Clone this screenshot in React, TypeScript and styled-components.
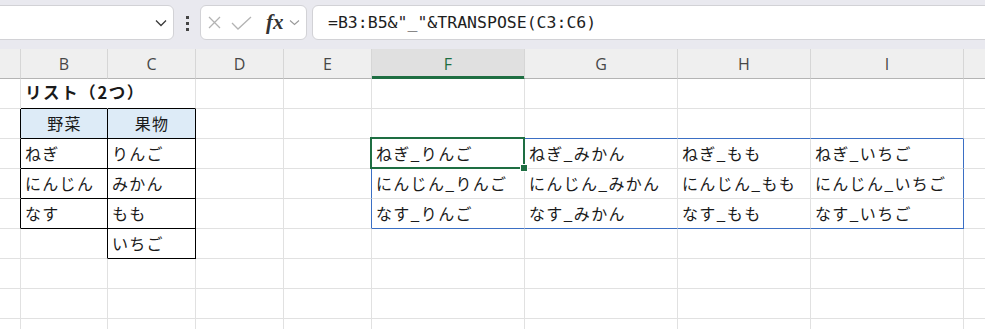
import React from 'react';
import styled, {createGlobalStyle} from "styled-components";

const GlobalStyle = createGlobalStyle`
    html, body {
        margin: 0;
        padding: 0;
        background: #ffffff;
        overflow: hidden;
    }
`

const COLS = [21, 87, 88, 88, 88, 153, 153, 133, 153, 80];
const LETTERS = ["", "B", "C", "D", "E", "F", "G", "H", "I", ""];
const ROWS = 9;

const vegs = ["ねぎ", "にんじん", "なす"];
const fruits = ["りんご", "みかん", "もも", "いちご"];

// r: 1-based sheet row, c: 0-based column index (0 = A)
const cellText = (r: number, c: number): string => {
    if (r === 1 && c === 1) return "リスト（2つ）";
    if (r === 2 && c === 1) return "野菜";
    if (r === 2 && c === 2) return "果物";
    if (c === 1 && r >= 3 && r <= 5) return vegs[r - 3];
    if (c === 2 && r >= 3 && r <= 6) return fruits[r - 3];
    if (c >= 5 && c <= 8 && r >= 3 && r <= 5) return vegs[r - 3] + "_" + fruits[c - 5];
    return "";
};

const boxed = (r: number, c: number) =>
    (r === 2 && (c === 1 || c === 2)) ||
    (c === 1 && r >= 3 && r <= 5) ||
    (c === 2 && r >= 3 && r <= 6);

const spill = (r: number, c: number) => c >= 5 && c <= 8 && r >= 3 && r <= 5;

const GRID = "#e1e1e1";
const BLACK = "#000000";
const BLUE = "#3b6fc4";

const edgeColor = (a: [number, number], b: [number, number], hide = false) => {
    if (boxed(...a) || boxed(...b)) return BLACK;
    if (spill(...a) !== spill(...b)) return BLUE;
    if (hide) return "transparent";
    return GRID;
};

export default function App() {
    const cells: React.ReactNode[] = [];
    for (let r = 1; r <= ROWS; r++) {
        for (let c = 0; c < COLS.length; c++) {
            const right = edgeColor([r, c], [r, c + 1], r === 1 && c === 1);
            const bottom = edgeColor([r, c], [r + 1, c]);
            cells.push(
                <Cell
                    key={`${r}-${c}`}
                    $right={right}
                    $bottom={bottom}
                    $head={r === 2 && (c === 1 || c === 2)}
                    $bold={r === 1}
                    $active={r === 3 && c === 5}
                >
                    {cellText(r, c)}
                </Cell>
            );
        }
    }

    return (
        <>
            <GlobalStyle/>
            <Page>
                <Toolbar>
                    <NameBox>
                        <svg width="12" height="8" viewBox="0 0 12 8">
                            <path d="M1 1.5 L6 6.5 L11 1.5" fill="none" stroke="#3a3a3a" strokeWidth="1.3"/>
                        </svg>
                    </NameBox>
                    <Dots>
                        <i/><i/><i/>
                    </Dots>
                    <FxBox>
                        <svg width="13" height="13" viewBox="0 0 13 13">
                            <path d="M1 1 L12 12 M12 1 L1 12" stroke="#b3b3b3" strokeWidth="1.3"/>
                        </svg>
                        <svg width="21" height="14" viewBox="0 0 21 14">
                            <path d="M1 7 L7 13 L20 1" fill="none" stroke="#b3b3b3" strokeWidth="1.3"/>
                        </svg>
                        <Fx>fx</Fx>
                        <svg width="11" height="7" viewBox="0 0 11 7">
                            <path d="M1 1.5 L5.5 5.5 L10 1.5" fill="none" stroke="#9a9a9a" strokeWidth="1.1"/>
                        </svg>
                    </FxBox>
                    <FormulaBox>=B3:B5&amp;"_"&amp;TRANSPOSE(C3:C6)</FormulaBox>
                </Toolbar>
                <Sheet>
                    {LETTERS.map((l, i) => (
                        <ColHead key={i} $selected={l === "F"}>{l}</ColHead>
                    ))}
                    {cells}
                </Sheet>
            </Page>
        </>
    );
}

const Page = styled.div`
    width: 985px;
    height: 329px;
    overflow: hidden;
    font-family: "Noto Sans CJK JP", "Noto Sans", sans-serif;
`
const Toolbar = styled.div`
    height: 49px;
    box-sizing: border-box;
    background: #e9e9ef;
    display: flex;
    align-items: flex-start;
    padding-top: 5px;
`
const Box = styled.div`
    height: 35px;
    box-sizing: border-box;
    background: #ffffff;
    border: 1px solid #d2d2d6;
    border-radius: 6px;
    display: flex;
    align-items: center;
`
const NameBox = styled(Box)`
    width: 183px;
    margin-left: -9px;
    justify-content: flex-end;
    padding-right: 6px;
`
const Dots = styled.div`
    width: 26px;
    display: flex;
    flex-direction: column;
    align-items: center;
    gap: 3px;
    padding-top: 11px;

    i {
        display: block;
        width: 3px;
        height: 3px;
        background: #444;
    }
`
const FxBox = styled(Box)`
    width: 107px;
    padding-left: 7px;
    gap: 9px;

    svg:nth-child(2) {
        margin-left: 1px;
    }
    svg:last-child {
        margin-left: -4px;
    }
`
const Fx = styled.span`
    font-family: "Liberation Serif", serif;
    font-style: italic;
    font-weight: 700;
    font-size: 21px;
    color: #333;
    line-height: 1;
    margin-left: 5px;
`
const FormulaBox = styled(Box)`
    flex: 1;
    margin-left: 5px;
    margin-right: -10px;
    padding-left: 15px;
    font-family: "DejaVu Sans Mono", "Liberation Mono", monospace;
    font-size: 16.5px;
    color: #1e1e1e;
`
const Sheet = styled.div`
    display: grid;
    grid-template-columns: ${COLS.map(w => w + "px").join(" ")};
    grid-template-rows: 30px repeat(${ROWS}, 30px);
`
const ColHead = styled.div<{ $selected?: boolean }>`
    box-sizing: border-box;
    background: ${p => p.$selected ? "#e0e0e0" : "#efefef"};
    border-right: 1px solid #d6d6d6;
    border-bottom: 1px solid #b4b4b4;
    box-shadow: ${p => p.$selected ? "inset 0 -2px 0 #1e6e42" : "none"};
    ${p => p.$selected && "border-bottom-color: #1e6e42;"}
    display: flex;
    align-items: center;
    justify-content: center;
    padding-top: 1px;
    font-family: "Open Sans", "Noto Sans", sans-serif;
    font-size: 16px;
    color: ${p => p.$selected ? "#1e6e42" : "#474747"};
`
const Cell = styled.div<{
    $right: string;
    $bottom: string;
    $head?: boolean;
    $bold?: boolean;
    $active?: boolean;
}>`
    position: relative;
    box-sizing: border-box;
    border-right: 1px solid ${p => p.$right};
    border-bottom: 1px solid ${p => p.$bottom};
    background: ${p => p.$head ? "#ddebf7" : "transparent"};
    display: flex;
    align-items: center;
    justify-content: ${p => p.$head ? "center" : "flex-start"};
    padding-left: ${p => p.$head ? "1px" : "4px"};
    padding-bottom: ${p => p.$bold ? "4px" : "1px"};
    white-space: nowrap;
    overflow: visible;
    font-size: ${p => p.$bold ? "16.5px" : "16px"};
    letter-spacing: ${p => p.$bold ? "1.6px" : "1.3px"};
    font-weight: ${p => p.$bold ? 700 : 400};
    color: #1a1a1a;
    z-index: ${p => p.$active ? 2 : 1};

    ${p => p.$active && `
        &::before {
            content: "";
            position: absolute;
            top: -2px;
            left: -2px;
            right: -1px;
            bottom: -1px;
            border: 2px solid #1e6e42;
        }
        &::after {
            content: "";
            position: absolute;
            right: -4px;
            bottom: -4px;
            width: 6px;
            height: 6px;
            background: #1e6e42;
            border: 1px solid #ffffff;
        }
    `}
`
